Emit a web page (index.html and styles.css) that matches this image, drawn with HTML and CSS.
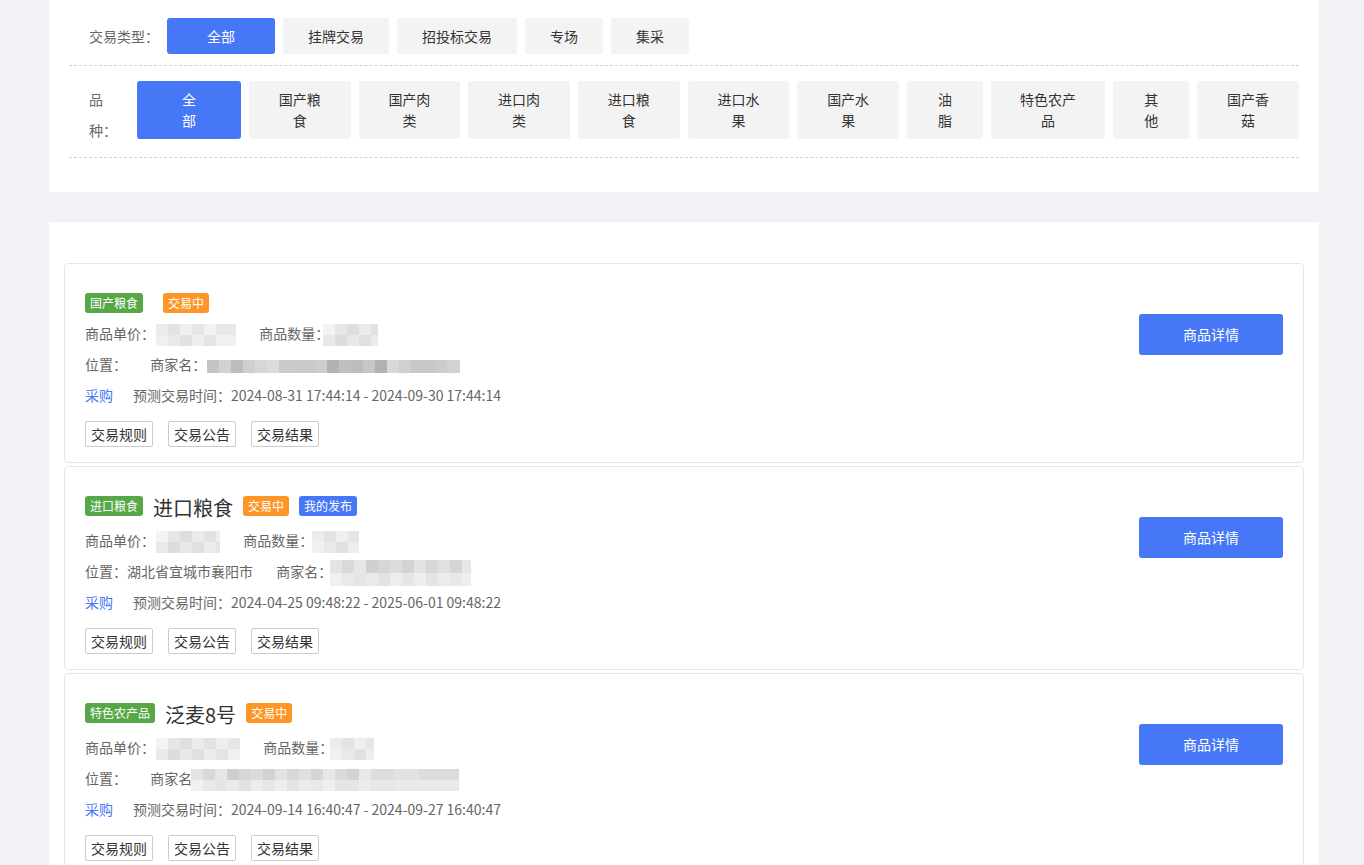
FILE: index.html
```html
<!DOCTYPE html>
<html lang="zh-CN">
<head>
<meta charset="utf-8">
<title>交易大厅</title>
<link rel="stylesheet" href="styles.css">
</head>
<body>
<div class="page">
  <section class="card filter-card">
    <div class="filter-row row-type">
      <div class="filter-label label-type">交易类型：</div>
      <div class="opts">
        <span class="opt opt-wide active">全部</span>
        <span class="opt">挂牌交易</span>
        <span class="opt">招投标交易</span>
        <span class="opt">专场</span>
        <span class="opt">集采</span>
      </div>
    </div>
    <div class="filter-row row-kind">
      <div class="filter-label label-kind">品种：</div>
      <div class="opts opts-wrap">
        <span class="opt opt-wide active">全部</span>
        <span class="opt">国产粮食</span>
        <span class="opt">国产肉类</span>
        <span class="opt">进口肉类</span>
        <span class="opt">进口粮食</span>
        <span class="opt">进口水果</span>
        <span class="opt">国产水果</span>
        <span class="opt">油脂</span>
        <span class="opt">特色农产品</span>
        <span class="opt">其他</span>
        <span class="opt">国产香菇</span>
      </div>
    </div>
  </section>

  <section class="card list-card">
    <div class="item">
      <div class="item-main">
        <div class="title-row">
          <span class="tag tag-green">国产粮食</span>
          <span class="title"></span>
          <span class="tag tag-orange">交易中</span>
        </div>
        <div class="info">
          <span class="group">商品单价：<span class="mosaic w80 m-a"></span></span>
          <span class="group">商品数量：<span class="mosaic w55 m-b o6"></span></span>
        </div>
        <div class="info">
          <span class="group">位置：</span>
          <span class="group">商家名：<span class="mosaic w253 thin m-dark"></span></span>
        </div>
        <div class="info">
          <span class="buy">采购</span><span>预测交易时间：2024-08-31 17:44:14 - 2024-09-30 17:44:14</span>
        </div>
        <div class="actions">
          <span class="btn-line">交易规则</span>
          <span class="btn-line">交易公告</span>
          <span class="btn-line">交易结果</span>
        </div>
      </div>
      <div class="item-side">
        <span class="btn-detail">商品详情</span>
      </div>
    </div>

    <div class="item">
      <div class="item-main">
        <div class="title-row">
          <span class="tag tag-green">进口粮食</span>
          <span class="title">进口粮食</span>
          <span class="tag tag-orange">交易中</span>
          <span class="tag tag-blue tag-gap">我的发布</span>
        </div>
        <div class="info">
          <span class="group">商品单价：<span class="mosaic w64 m-b"></span></span>
          <span class="group">商品数量：<span class="mosaic w47 m-a o1"></span></span>
        </div>
        <div class="info">
          <span class="group">位置：湖北省宜城市襄阳市</span>
          <span class="group">商家名：<span class="mosaic w141 tall m-mid o2"></span></span>
        </div>
        <div class="info">
          <span class="buy">采购</span><span>预测交易时间：2024-04-25 09:48:22 - 2025-06-01 09:48:22</span>
        </div>
        <div class="actions">
          <span class="btn-line">交易规则</span>
          <span class="btn-line">交易公告</span>
          <span class="btn-line">交易结果</span>
        </div>
      </div>
      <div class="item-side">
        <span class="btn-detail">商品详情</span>
      </div>
    </div>

    <div class="item">
      <div class="item-main">
        <div class="title-row">
          <span class="tag tag-green">特色农产品</span>
          <span class="title">泛麦8号</span>
          <span class="tag tag-orange">交易中</span>
        </div>
        <div class="info">
          <span class="group">商品单价：<span class="mosaic w84 m-b"></span></span>
          <span class="group">商品数量：<span class="mosaic w44 m-a o3"></span></span>
        </div>
        <div class="info">
          <span class="group">位置：</span>
          <span class="group">商家名：<span class="mosaic w268 m-mid o15"></span></span>
        </div>
        <div class="info">
          <span class="buy">采购</span><span>预测交易时间：2024-09-14 16:40:47 - 2024-09-27 16:40:47</span>
        </div>
        <div class="actions">
          <span class="btn-line">交易规则</span>
          <span class="btn-line">交易公告</span>
          <span class="btn-line">交易结果</span>
        </div>
      </div>
      <div class="item-side">
        <span class="btn-detail">商品详情</span>
      </div>
    </div>
  </section>
</div>
</body>
</html>
```

FILE: styles.css
```css
* { box-sizing: border-box; }

html, body {
  margin: 0;
  padding: 0;
  background: #f0f2f5;
  font-family: "Noto Sans CJK SC", "Microsoft YaHei", sans-serif;
  color: #333;
}

.page {
  padding: 0 45px 0 49px;
}

.card {
  background: #fff;
  width: 1270px;
}

.filter-card {
  padding: 0 20px 34px;
  border-radius: 0 0 4px 4px;
}

.filter-row {
  display: flex;
  padding-left: 20px;
  border-bottom: 1px dashed #d3d3d3;
}

.row-type {
  align-items: center;
  padding-top: 18px;
  padding-bottom: 11px;
}

.row-kind {
  align-items: flex-start;
  padding-top: 15px;
  padding-bottom: 18px;
}

.filter-label {
  flex: none;
  font-size: 14px;
  color: #666;
}

.label-type {
  width: 78px;
  white-space: nowrap;
  line-height: 20px;
}

.label-kind {
  width: 30px;
  height: 58px;
  margin-right: 18px;
  line-height: 31px;
  padding-top: 3px;
}

.opts {
  display: flex;
  gap: 8px;
  flex: 1;
  min-width: 0;
}

.opt {
  display: block;
  background: #f3f3f3;
  color: #333;
  font-size: 14px;
  border-radius: 3px;
  padding: 0 25px;
  text-align: center;
}

.row-type .opt {
  height: 36px;
  line-height: 36px;
  white-space: nowrap;
  flex: none;
}

.opts-wrap .opt {
  padding-top: 8px;
  padding-bottom: 8px;
  line-height: 21px;
  flex: 0 1 auto;
}

.opt-wide {
  padding-left: 40px;
  padding-right: 40px;
}

.opts-wrap .opt-wide {
  padding-left: 39px;
  padding-right: 39px;
}

.opt.active {
  background: #4577f6;
  color: #fff;
}

.list-card {
  margin-top: 30px;
  padding: 41px 15px 20px;
}

.item {
  display: flex;
  align-items: flex-start;
  border: 1px solid #e6e6e6;
  border-radius: 4px;
  padding: 29px 20px 15px 20px;
  margin-bottom: 3px;
}

.item-main {
  flex: 1;
  min-width: 0;
}

.item-side {
  flex: none;
  margin-top: 21px;
}

.title-row {
  display: flex;
  align-items: flex-start;
}

.tag {
  display: inline-block;
  height: 20px;
  line-height: 20px;
  padding: 0 5px;
  border-radius: 3px;
  font-size: 12px;
  color: #fff;
  white-space: nowrap;
}

.tag-green { background: #56a847; }
.tag-orange { background: #fd9527; }
.tag-blue { background: #4577f6; }
.tag-gap { margin-left: 10px; }

.title {
  margin: 0 10px;
  font-size: 20px;
  line-height: 24px;
  color: #333;
}

.info {
  margin-top: 10px;
  font-size: 14px;
  line-height: 21px;
  color: #666;
  white-space: nowrap;
}

.group {
  margin-right: 20px;
}

.buy {
  color: #4577f6;
  margin-right: 20px;
}

.mosaic {
  display: inline-block;
  vertical-align: middle;
  position: relative;
  height: 22px;
  margin: -6px 0 -6px 1px;
}

.mosaic.thin { height: 13px; margin-top: -2px; margin-bottom: -2px; }
.mosaic.tall { height: 26px; margin-top: -8px; margin-bottom: -8px; }

.o1 { margin-left: -1px; }
.o2 { margin-left: -2px; }
.o3 { margin-left: -3px; }
.o6 { margin-left: -6px; }
.o15 { margin-left: -15px; }

.m-a {
  background:
    linear-gradient(90deg, #ececec 0 12px, #e3e3e3 12px 24px, #efefef 24px 36px, #e6e6e6 36px 48px, #f2f2f2 48px 60px, #e8e8e8 60px) top / 100% 50% no-repeat,
    linear-gradient(90deg, #f0f0f0 0 12px, #e9e9e9 12px 24px, #e1e1e1 24px 36px, #ededed 36px 48px, #e4e4e4 48px 60px, #f1f1f1 60px) bottom / 100% 50% no-repeat;
}

.m-b {
  background:
    linear-gradient(90deg, #f3f3f3 0 12px, #e6e6e6 12px 24px, #dedede 24px 36px, #ebebeb 36px 48px, #e2e2e2 48px 60px, #eeeeee 60px 72px, #e6e6e6 72px) top / 100% 50% no-repeat,
    linear-gradient(90deg, #e9e9e9 0 12px, #dddddd 12px 24px, #e8e8e8 24px 36px, #e0e0e0 36px 48px, #ececec 48px 60px, #e4e4e4 60px 72px, #f0f0f0 72px) bottom / 100% 50% no-repeat;
}

.m-dark {
  background: linear-gradient(90deg, #c4c4c0 0 12px, #d2d2d4 12px 24px, #c2bcb8 24px 36px, #cfcfd0 36px 48px, #d6d8d8 48px 60px, #dcdcda 60px 72px, #cbcbcb 72px 96px, #c9c9c9 96px 108px, #cdcdcd 108px 120px, #b3b3ae 120px 132px, #c0c0c4 132px 144px, #bcbcbc 144px 156px, #c6c6c6 156px 168px, #adb2b9 168px 180px, #d8d8d6 180px 192px, #d0d0d0 192px 204px, #c8c8c8 204px 228px, #cccccc 228px 240px, #d2d2d2 240px);
}

.m-mid {
  background:
    linear-gradient(90deg, #e4e4e4 0 12px, #d9d9d9 12px 24px, #e6e6e6 24px 36px, #cfcfcf 36px 48px, #d6d6d6 48px 60px, #dcdcdc 60px 72px, #d3d3d3 72px 84px, #e2e2e2 84px 96px, #d8d8d8 96px 108px, #e0e0e0 108px 120px, #d5d5d5 120px 132px, #e7e7e7 132px 144px, #dadada 144px 156px, #d0d4d8 156px 168px, #e8e8e8 168px 180px, #dddddd 180px 204px, #e2e2e2 204px 228px, #dcdcdc 228px) top / 100% 50% no-repeat,
    linear-gradient(90deg, #f0f0f0 0 12px, #e9e9e9 12px 24px, #e5e5e5 24px 36px, #eaeaea 36px 48px, #e2e2e2 48px 60px, #ededed 60px 72px, #e6e6e6 72px 84px, #eeeeee 84px 96px, #e4e4e4 96px 108px, #ebebeb 108px 120px, #e8e8e8 120px 132px, #efefef 132px 144px, #e5e5e5 144px 168px, #ececec 168px 180px, #e7e7e7 180px 204px, #eaeaea 204px) bottom / 100% 50% no-repeat;
}

.w44 { width: 44px; }
.w47 { width: 47px; }
.w55 { width: 55px; }
.w64 { width: 64px; }
.w80 { width: 80px; }
.w84 { width: 84px; }
.w141 { width: 141px; }
.w253 { width: 253px; }
.w268 { width: 268px; }

.actions {
  display: flex;
  gap: 15px;
  margin-top: 15px;
}

.btn-line {
  display: block;
  height: 26px;
  line-height: 24px;
  padding: 0 5px;
  border: 1px solid #cccccc;
  border-radius: 2px;
  font-size: 14px;
  color: #333;
  background: #fff;
  white-space: nowrap;
}

.btn-detail {
  display: block;
  width: 144px;
  height: 41px;
  line-height: 41px;
  text-align: center;
  background: #4577f6;
  color: #fff;
  font-size: 14px;
  border-radius: 3px;
}
```
